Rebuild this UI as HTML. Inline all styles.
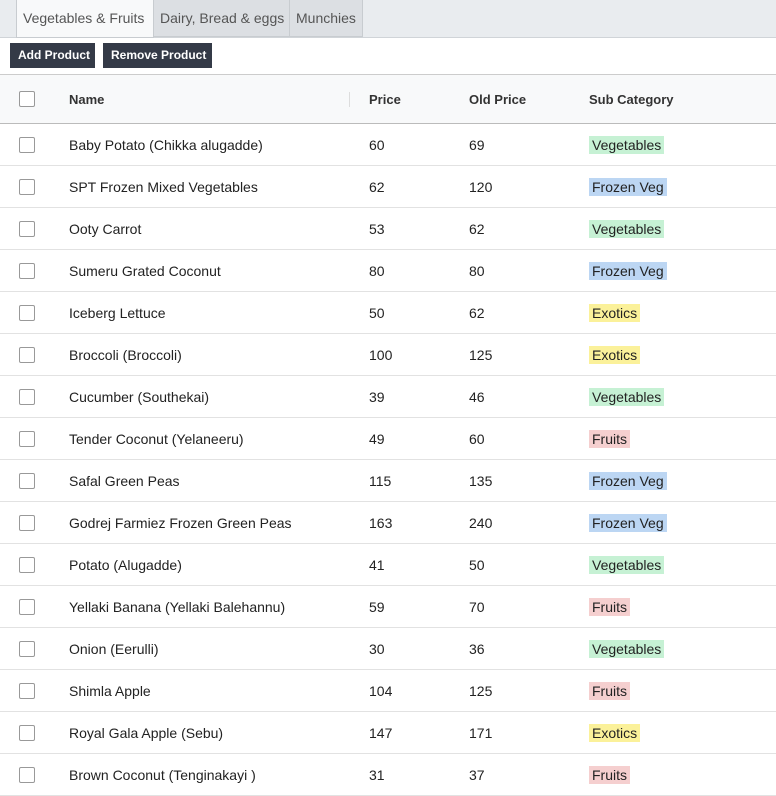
<!DOCTYPE html>
<html><head><style>
*{box-sizing:border-box;margin:0;padding:0}
body{width:776px;height:776px;overflow:hidden;background:#fff;font-family:"Liberation Sans",sans-serif;color:#222;font-size:14px}
.tabs{height:38px;background:#e9ecef;border-bottom:1px solid #d0d4d8;position:relative}
.tab{position:absolute;top:0;height:37px;line-height:37px;font-size:14px;color:#555;border:1px solid #c8ccd0;border-top:none;background:#dcdfe3;padding:0 6px;white-space:nowrap;overflow:hidden}
.tab.a{background:#f8f9fa;height:38px}
.btn{position:absolute;top:43px;height:25px;line-height:25px;background:#343a47;color:#fff;font-weight:bold;font-size:12px;padding:0 8px;white-space:nowrap}
.hdr{position:absolute;top:74px;left:0;width:776px;height:50px;background:#f8f9fa;border-top:1px solid #ccc;border-bottom:1px solid #bbb}
.row{position:absolute;left:0;width:776px;height:42px;border-bottom:1px solid #e2e2e2}
.c{position:absolute;top:0;line-height:42px;white-space:nowrap}
.hdr .c{line-height:49px;font-weight:bold;font-size:13px;color:#333}
.cb{position:absolute;left:19px;width:16px;height:16px;border:1.5px solid #999;border-radius:2px;background:#fff}
.b{padding:1px 3px}
.V{background:#c6f1d4}.F{background:#bcd6f3}.E{background:#fbf19a}.R{background:#f5cfcf}
</style></head><body>
<div class="tabs">
<div class="tab a" style="left:16px;width:138px">Vegetables &amp; Fruits</div>
<div class="tab" style="left:153px;width:137px">Dairy, Bread &amp; eggs</div>
<div class="tab" style="left:289px;width:74px">Munchies</div>
</div>
<div class="btn" style="left:10px;width:85px">Add Product</div>
<div class="btn" style="left:103px;width:109px">Remove Product</div>
<div class="hdr">
<div class="cb" style="top:16px"></div>
<div class="c" style="left:69px">Name</div>
<div style="position:absolute;left:349px;top:17px;width:1px;height:15px;background:#ddd"></div>
<div class="c" style="left:369px">Price</div>
<div class="c" style="left:469px">Old Price</div>
<div class="c" style="left:589px">Sub Category</div>
</div>
<div id="rows"></div>
<script>
var d=[["Baby Potato (Chikka alugadde)",60,69,"Vegetables","V"],["SPT Frozen Mixed Vegetables",62,120,"Frozen Veg","F"],["Ooty Carrot",53,62,"Vegetables","V"],["Sumeru Grated Coconut",80,80,"Frozen Veg","F"],["Iceberg Lettuce",50,62,"Exotics","E"],["Broccoli (Broccoli)",100,125,"Exotics","E"],["Cucumber (Southekai)",39,46,"Vegetables","V"],["Tender Coconut (Yelaneeru)",49,60,"Fruits","R"],["Safal Green Peas",115,135,"Frozen Veg","F"],["Godrej Farmiez Frozen Green Peas",163,240,"Frozen Veg","F"],["Potato (Alugadde)",41,50,"Vegetables","V"],["Yellaki Banana (Yellaki Balehannu)",59,70,"Fruits","R"],["Onion (Eerulli)",30,36,"Vegetables","V"],["Shimla Apple",104,125,"Fruits","R"],["Royal Gala Apple (Sebu)",147,171,"Exotics","E"],["Brown Coconut (Tenginakayi )",31,37,"Fruits","R"]];
var h="";d.forEach(function(r,i){h+='<div class="row" style="top:'+(124+i*42)+'px"><div class="cb" style="top:13px"></div><div class="c" style="left:69px">'+r[0]+'</div><div class="c" style="left:369px">'+r[1]+'</div><div class="c" style="left:469px">'+r[2]+'</div><div class="c" style="left:589px"><span class="b '+r[4]+'">'+r[3]+'</span></div></div>'});
document.getElementById("rows").innerHTML=h;
</script>
</body></html>
